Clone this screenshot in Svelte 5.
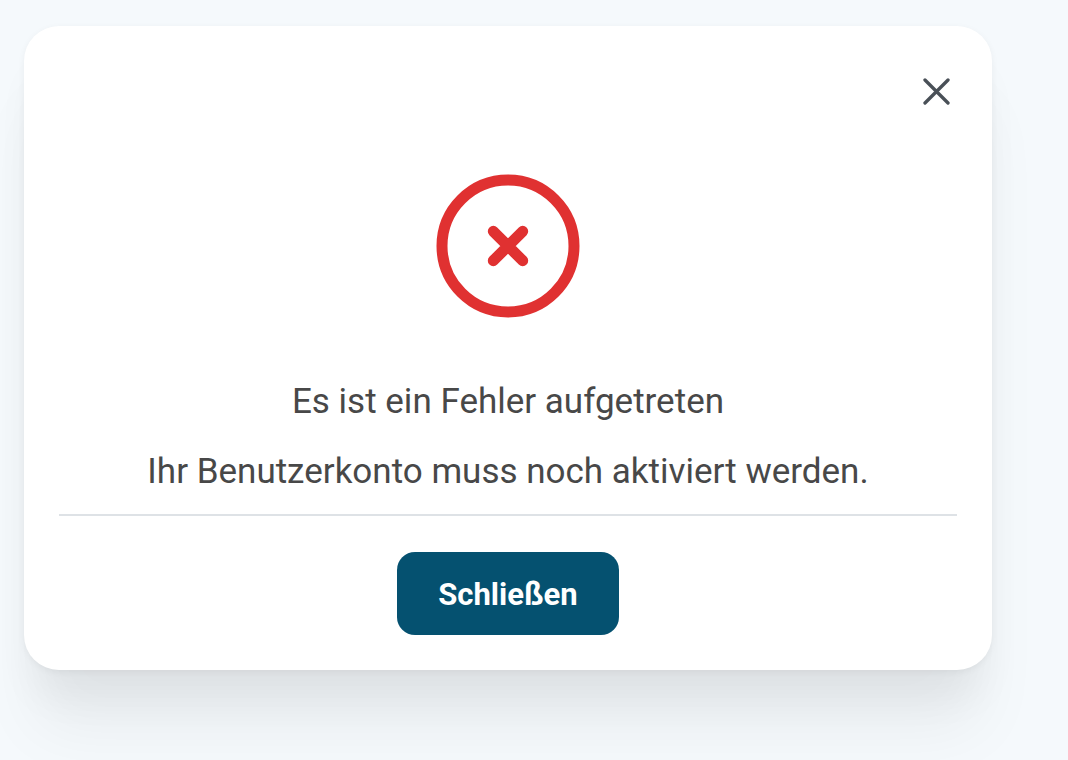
<script lang="ts">
  let open = $state(true);

  function close() { open = false; }
</script>

<main class="page">
  {#if open}
    <div class="modal" role="alertdialog" aria-labelledby="modal-title" aria-describedby="modal-text">
      <button class="dismiss" type="button" aria-label="Dialog schließen" onclick={close}>
        <svg viewBox="0 0 28 28" aria-hidden="true"><path d="M3 3 26 26M26 3 3 26" /></svg>
      </button>
      <svg class="error-icon" viewBox="0 0 144 144" aria-hidden="true">
        <circle cx="72" cy="72" r="66" />
        <path d="M57.3 57.3 86.7 86.7M86.7 57.3 57.3 86.7" />
      </svg>
      <h1 id="modal-title">Es ist ein Fehler aufgetreten</h1>
      <p id="modal-text">Ihr Benutzerkonto muss noch aktiviert werden.</p>
      <footer>
        <button class="primary" type="button" onclick={close}>Schließen</button>
      </footer>
    </div>
  {/if}
</main>

<style>
  :global(body) { margin: 0; background: #f5f9fc; }
  .page { box-sizing: border-box; min-height: 100vh; padding: 26px 76px 90px 24px; overflow: hidden; font-family: Roboto, sans-serif; }
  .modal {
    display: flex;
    flex-direction: column;
    align-items: center;
    padding: 35px;
    border-radius: 35px;
    background: #fff;
    box-shadow:
      0 2px 7px rgba(0, 0, 0, 0.05),
      0 70px 64px -10px rgba(0, 0, 0, 0.05),
      0 36px 42px -10px rgba(0, 0, 0, 0.05);
    color: #484848;
    text-align: center;
  }
  button { border: 0; font-family: inherit; cursor: pointer; }
  .dismiss { align-self: flex-end; display: flex; margin-top: 9px; padding: 7px; background: none; }
  .dismiss svg { width: 28px; height: 28px; fill: none; stroke: #495057; stroke-width: 3.3; stroke-linecap: round; }
  .error-icon { width: 144px; height: 144px; margin: 62px 0 49px; fill: none; stroke: #e03131; stroke-width: 11; stroke-linecap: round; }
  h1, p { margin: 0; font-size: 35px; font-weight: 400; line-height: 70px; }
  footer { box-sizing: border-box; width: 100%; margin-top: 7px; padding-top: 36px; border-top: 2px solid #dee2e6; }
  .primary { padding: 25px 41px 23px; border-radius: 18px; background: #055170; color: #fff; font-size: 31px; font-weight: 700; line-height: 35px; }
</style>
